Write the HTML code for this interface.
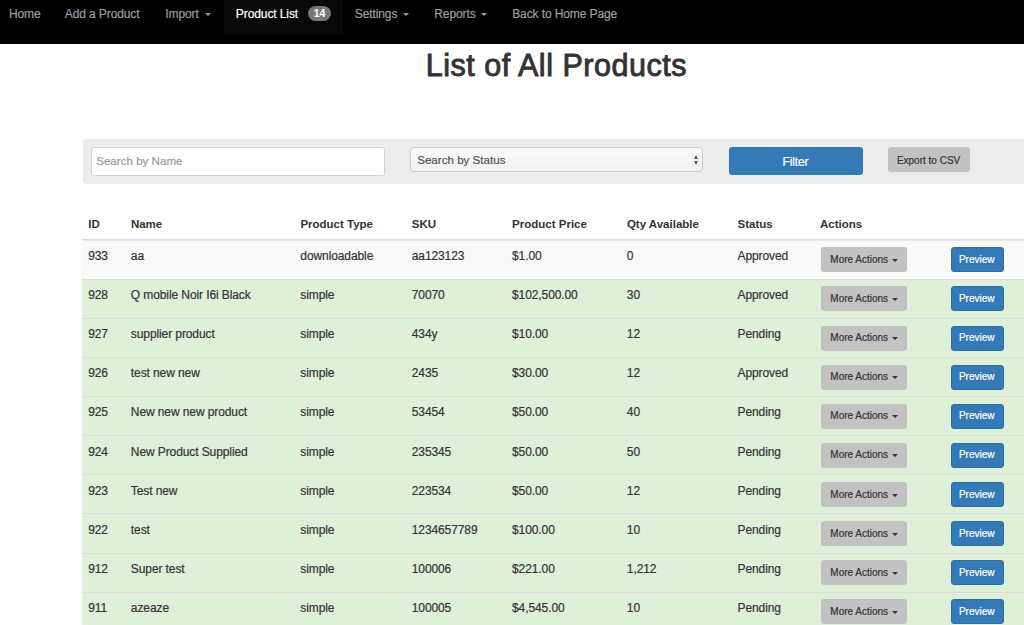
<!DOCTYPE html>
<html><head><meta charset="utf-8"><style>
html,body{margin:0;padding:0;width:1024px;height:625px;overflow:hidden;background:#fff;font-family:"Liberation Sans",sans-serif;}
.t{position:absolute;white-space:nowrap;}
.r{position:absolute;}
</style></head><body>
<div class="r" style="left:0px;top:0px;width:1024px;height:44px;background:#000"></div>
<div class="r" style="left:224px;top:0px;width:119px;height:35px;background:#080808"></div>
<div class="t" style="left:8.96px;top:6.64px;font-size:12px;line-height:15px;color:#9d9d9d;-webkit-text-stroke:0.2px #9d9d9d;letter-spacing:-0.1px;">Home</div>
<div class="t" style="left:64.76px;top:6.64px;font-size:12px;line-height:15px;color:#9d9d9d;-webkit-text-stroke:0.2px #9d9d9d;letter-spacing:-0.1px;">Add a Product</div>
<div class="t" style="left:165.26px;top:6.64px;font-size:12px;line-height:15px;color:#9d9d9d;-webkit-text-stroke:0.2px #9d9d9d;letter-spacing:-0.1px;">Import</div>
<div class="r" style="left:205px;top:13px;width:0;height:0;border-top:3.4px solid #9d9d9d;border-left:3.25px solid transparent;border-right:3.25px solid transparent"></div>
<div class="t" style="left:235.86px;top:6.64px;font-size:12px;line-height:15px;color:#fff;-webkit-text-stroke:0.2px #fff;letter-spacing:-0.1px;">Product List</div>
<div class="r" style="left:308px;top:6px;width:23px;height:15px;background:#777;border-radius:8px"></div>
<div class="t" style="left:313.76px;top:7.36px;font-size:10.5px;line-height:13px;color:#fff;font-weight:700;">14</div>
<div class="t" style="left:354.76px;top:6.64px;font-size:12px;line-height:15px;color:#9d9d9d;-webkit-text-stroke:0.2px #9d9d9d;letter-spacing:-0.1px;">Settings</div>
<div class="r" style="left:403.3px;top:13px;width:0;height:0;border-top:3.4px solid #9d9d9d;border-left:3.25px solid transparent;border-right:3.25px solid transparent"></div>
<div class="t" style="left:434.26px;top:6.64px;font-size:12px;line-height:15px;color:#9d9d9d;-webkit-text-stroke:0.2px #9d9d9d;letter-spacing:-0.1px;">Reports</div>
<div class="r" style="left:481.3px;top:13px;width:0;height:0;border-top:3.4px solid #9d9d9d;border-left:3.25px solid transparent;border-right:3.25px solid transparent"></div>
<div class="t" style="left:512.16px;top:6.64px;font-size:12px;line-height:15px;color:#9d9d9d;-webkit-text-stroke:0.2px #9d9d9d;letter-spacing:-0.1px;">Back to Home Page</div>
<div class="t" style="left:425.67px;top:46.13px;font-size:30.5px;line-height:38px;color:#333;letter-spacing:0.52px;-webkit-text-stroke:0.9px #333">List of All Products</div>
<div class="r" style="left:83px;top:139px;width:947px;height:45px;background:#ececec;border-radius:4px"></div>
<div class="r" style="left:91px;top:147px;width:294px;height:29px;background:#fff;border:1px solid #d2d2d2;border-radius:3px;box-sizing:border-box"></div>
<div class="t" style="left:96.19px;top:154.28px;font-size:11.6px;line-height:14px;color:#999;-webkit-text-stroke:0.2px #999;">Search by Name</div>
<div class="r" style="left:410px;top:147px;width:293px;height:25px;background:linear-gradient(#fbfbfb,#f1f1f1);border:1px solid #ccc;border-radius:4px;box-sizing:border-box"></div>
<div class="t" style="left:417.19px;top:152.68px;font-size:11.6px;line-height:14px;color:#555;-webkit-text-stroke:0.2px #555;">Search by Status</div>
<div class="r" style="left:694px;top:154.5px;width:0;height:0;border-bottom:4px solid #555;border-left:2.6px solid transparent;border-right:2.6px solid transparent"></div>
<div class="r" style="left:694px;top:161px;width:0;height:0;border-top:4px solid #555;border-left:2.6px solid transparent;border-right:2.6px solid transparent"></div>
<div class="r" style="left:729px;top:147px;width:134px;height:28px;background:#337ab7;border-radius:3px"></div>
<div class="t" style="left:782.46px;top:154.84px;font-size:12px;line-height:15px;color:#fff;-webkit-text-stroke:0.2px #fff;letter-spacing:-0.1px;">Filter</div>
<div class="r" style="left:888px;top:147px;width:82px;height:25px;background:#c2c2c2;border-radius:3px"></div>
<div class="t" style="left:896.90px;top:154.63px;font-size:10px;line-height:12px;color:#333;-webkit-text-stroke:0.2px #333;">Export to CSV</div>
<div class="t" style="left:88.19px;top:216.81px;font-size:11.5px;line-height:14px;color:#333;font-weight:700;">ID</div>
<div class="t" style="left:130.89px;top:216.81px;font-size:11.5px;line-height:14px;color:#333;font-weight:700;">Name</div>
<div class="t" style="left:300.39px;top:216.81px;font-size:11.5px;line-height:14px;color:#333;font-weight:700;">Product Type</div>
<div class="t" style="left:411.80px;top:216.81px;font-size:11.5px;line-height:14px;color:#333;font-weight:700;">SKU</div>
<div class="t" style="left:512.10px;top:216.81px;font-size:11.5px;line-height:14px;color:#333;font-weight:700;">Product Price</div>
<div class="t" style="left:626.90px;top:216.81px;font-size:11.5px;line-height:14px;color:#333;font-weight:700;">Qty Available</div>
<div class="t" style="left:737.60px;top:216.81px;font-size:11.5px;line-height:14px;color:#333;font-weight:700;">Status</div>
<div class="t" style="left:820.00px;top:216.81px;font-size:11.5px;line-height:14px;color:#333;font-weight:700;">Actions</div>
<div class="r" style="left:82px;top:239px;width:942px;height:1px;background:#dcdcdc"></div>
<div class="r" style="left:82px;top:240px;width:942px;height:1px;background:#e9e9e9"></div>
<div class="r" style="left:82px;top:241px;width:942px;height:38px;background:#f9f9f9"></div>
<div class="t" style="left:88.16px;top:249.04px;font-size:12px;line-height:15px;color:#333;-webkit-text-stroke:0.2px #333;letter-spacing:-0.1px;">933</div>
<div class="t" style="left:130.86px;top:249.04px;font-size:12px;line-height:15px;color:#333;-webkit-text-stroke:0.2px #333;letter-spacing:-0.1px;">aa</div>
<div class="t" style="left:300.36px;top:249.04px;font-size:12px;line-height:15px;color:#333;-webkit-text-stroke:0.2px #333;letter-spacing:-0.1px;">downloadable</div>
<div class="t" style="left:411.76px;top:249.04px;font-size:12px;line-height:15px;color:#333;-webkit-text-stroke:0.2px #333;letter-spacing:-0.1px;">aa123123</div>
<div class="t" style="left:512.06px;top:249.04px;font-size:12px;line-height:15px;color:#333;-webkit-text-stroke:0.2px #333;letter-spacing:-0.1px;">$1.00</div>
<div class="t" style="left:626.86px;top:249.04px;font-size:12px;line-height:15px;color:#333;-webkit-text-stroke:0.2px #333;letter-spacing:-0.1px;">0</div>
<div class="t" style="left:737.56px;top:249.04px;font-size:12px;line-height:15px;color:#333;-webkit-text-stroke:0.2px #333;letter-spacing:-0.1px;">Approved</div>
<div class="r" style="left:821px;top:247px;width:86px;height:25px;background:#c2c2c2;border-radius:3px"></div>
<div class="t" style="left:830.30px;top:254.43px;font-size:10px;line-height:12px;color:#333;-webkit-text-stroke:0.2px #333;">More Actions</div>
<div class="r" style="left:891.8px;top:259px;width:0;height:0;border-top:3px solid #333;border-left:3.1px solid transparent;border-right:3.1px solid transparent"></div>
<div class="r" style="left:951px;top:247px;width:53px;height:25px;background:#337ab7;border:1px solid #2e6da4;border-radius:3px;box-sizing:border-box"></div>
<div class="t" style="left:958.90px;top:253.53px;font-size:10px;line-height:12px;color:#fff;-webkit-text-stroke:0.2px #fff;">Preview</div>
<div class="r" style="left:82px;top:279px;width:942px;height:1px;background:#ddd"></div>
<div class="r" style="left:82px;top:280px;width:942px;height:38px;background:#dff0d8"></div>
<div class="t" style="left:88.16px;top:288.04px;font-size:12px;line-height:15px;color:#333;-webkit-text-stroke:0.2px #333;letter-spacing:-0.1px;">928</div>
<div class="t" style="left:130.86px;top:288.04px;font-size:12px;line-height:15px;color:#333;-webkit-text-stroke:0.2px #333;letter-spacing:-0.1px;">Q mobile Noir I6i Black</div>
<div class="t" style="left:300.36px;top:288.04px;font-size:12px;line-height:15px;color:#333;-webkit-text-stroke:0.2px #333;letter-spacing:-0.1px;">simple</div>
<div class="t" style="left:411.76px;top:288.04px;font-size:12px;line-height:15px;color:#333;-webkit-text-stroke:0.2px #333;letter-spacing:-0.1px;">70070</div>
<div class="t" style="left:512.06px;top:288.04px;font-size:12px;line-height:15px;color:#333;-webkit-text-stroke:0.2px #333;letter-spacing:-0.1px;">$102,500.00</div>
<div class="t" style="left:626.86px;top:288.04px;font-size:12px;line-height:15px;color:#333;-webkit-text-stroke:0.2px #333;letter-spacing:-0.1px;">30</div>
<div class="t" style="left:737.56px;top:288.04px;font-size:12px;line-height:15px;color:#333;-webkit-text-stroke:0.2px #333;letter-spacing:-0.1px;">Approved</div>
<div class="r" style="left:821px;top:286px;width:86px;height:25px;background:#c2c2c2;border-radius:3px"></div>
<div class="t" style="left:830.30px;top:293.43px;font-size:10px;line-height:12px;color:#333;-webkit-text-stroke:0.2px #333;">More Actions</div>
<div class="r" style="left:891.8px;top:298px;width:0;height:0;border-top:3px solid #333;border-left:3.1px solid transparent;border-right:3.1px solid transparent"></div>
<div class="r" style="left:951px;top:286px;width:53px;height:25px;background:#337ab7;border:1px solid #2e6da4;border-radius:3px;box-sizing:border-box"></div>
<div class="t" style="left:958.90px;top:292.53px;font-size:10px;line-height:12px;color:#fff;-webkit-text-stroke:0.2px #fff;">Preview</div>
<div class="r" style="left:82px;top:318px;width:942px;height:1px;background:#ddd"></div>
<div class="r" style="left:82px;top:319px;width:942px;height:38px;background:#dff0d8"></div>
<div class="t" style="left:88.16px;top:327.04px;font-size:12px;line-height:15px;color:#333;-webkit-text-stroke:0.2px #333;letter-spacing:-0.1px;">927</div>
<div class="t" style="left:130.86px;top:327.04px;font-size:12px;line-height:15px;color:#333;-webkit-text-stroke:0.2px #333;letter-spacing:-0.1px;">supplier product</div>
<div class="t" style="left:300.36px;top:327.04px;font-size:12px;line-height:15px;color:#333;-webkit-text-stroke:0.2px #333;letter-spacing:-0.1px;">simple</div>
<div class="t" style="left:411.76px;top:327.04px;font-size:12px;line-height:15px;color:#333;-webkit-text-stroke:0.2px #333;letter-spacing:-0.1px;">434y</div>
<div class="t" style="left:512.06px;top:327.04px;font-size:12px;line-height:15px;color:#333;-webkit-text-stroke:0.2px #333;letter-spacing:-0.1px;">$10.00</div>
<div class="t" style="left:626.86px;top:327.04px;font-size:12px;line-height:15px;color:#333;-webkit-text-stroke:0.2px #333;letter-spacing:-0.1px;">12</div>
<div class="t" style="left:737.56px;top:327.04px;font-size:12px;line-height:15px;color:#333;-webkit-text-stroke:0.2px #333;letter-spacing:-0.1px;">Pending</div>
<div class="r" style="left:821px;top:326px;width:86px;height:25px;background:#c2c2c2;border-radius:3px"></div>
<div class="t" style="left:830.30px;top:332.43px;font-size:10px;line-height:12px;color:#333;-webkit-text-stroke:0.2px #333;">More Actions</div>
<div class="r" style="left:891.8px;top:337px;width:0;height:0;border-top:3px solid #333;border-left:3.1px solid transparent;border-right:3.1px solid transparent"></div>
<div class="r" style="left:951px;top:326px;width:53px;height:25px;background:#337ab7;border:1px solid #2e6da4;border-radius:3px;box-sizing:border-box"></div>
<div class="t" style="left:958.90px;top:331.53px;font-size:10px;line-height:12px;color:#fff;-webkit-text-stroke:0.2px #fff;">Preview</div>
<div class="r" style="left:82px;top:357px;width:942px;height:1px;background:#ddd"></div>
<div class="r" style="left:82px;top:358px;width:942px;height:38px;background:#dff0d8"></div>
<div class="t" style="left:88.16px;top:366.04px;font-size:12px;line-height:15px;color:#333;-webkit-text-stroke:0.2px #333;letter-spacing:-0.1px;">926</div>
<div class="t" style="left:130.86px;top:366.04px;font-size:12px;line-height:15px;color:#333;-webkit-text-stroke:0.2px #333;letter-spacing:-0.1px;">test new new</div>
<div class="t" style="left:300.36px;top:366.04px;font-size:12px;line-height:15px;color:#333;-webkit-text-stroke:0.2px #333;letter-spacing:-0.1px;">simple</div>
<div class="t" style="left:411.76px;top:366.04px;font-size:12px;line-height:15px;color:#333;-webkit-text-stroke:0.2px #333;letter-spacing:-0.1px;">2435</div>
<div class="t" style="left:512.06px;top:366.04px;font-size:12px;line-height:15px;color:#333;-webkit-text-stroke:0.2px #333;letter-spacing:-0.1px;">$30.00</div>
<div class="t" style="left:626.86px;top:366.04px;font-size:12px;line-height:15px;color:#333;-webkit-text-stroke:0.2px #333;letter-spacing:-0.1px;">12</div>
<div class="t" style="left:737.56px;top:366.04px;font-size:12px;line-height:15px;color:#333;-webkit-text-stroke:0.2px #333;letter-spacing:-0.1px;">Approved</div>
<div class="r" style="left:821px;top:365px;width:86px;height:25px;background:#c2c2c2;border-radius:3px"></div>
<div class="t" style="left:830.30px;top:371.43px;font-size:10px;line-height:12px;color:#333;-webkit-text-stroke:0.2px #333;">More Actions</div>
<div class="r" style="left:891.8px;top:376px;width:0;height:0;border-top:3px solid #333;border-left:3.1px solid transparent;border-right:3.1px solid transparent"></div>
<div class="r" style="left:951px;top:365px;width:53px;height:25px;background:#337ab7;border:1px solid #2e6da4;border-radius:3px;box-sizing:border-box"></div>
<div class="t" style="left:958.90px;top:370.53px;font-size:10px;line-height:12px;color:#fff;-webkit-text-stroke:0.2px #fff;">Preview</div>
<div class="r" style="left:82px;top:396px;width:942px;height:1px;background:#ddd"></div>
<div class="r" style="left:82px;top:397px;width:942px;height:38px;background:#dff0d8"></div>
<div class="t" style="left:88.16px;top:405.04px;font-size:12px;line-height:15px;color:#333;-webkit-text-stroke:0.2px #333;letter-spacing:-0.1px;">925</div>
<div class="t" style="left:130.86px;top:405.04px;font-size:12px;line-height:15px;color:#333;-webkit-text-stroke:0.2px #333;letter-spacing:-0.1px;">New new new product</div>
<div class="t" style="left:300.36px;top:405.04px;font-size:12px;line-height:15px;color:#333;-webkit-text-stroke:0.2px #333;letter-spacing:-0.1px;">simple</div>
<div class="t" style="left:411.76px;top:405.04px;font-size:12px;line-height:15px;color:#333;-webkit-text-stroke:0.2px #333;letter-spacing:-0.1px;">53454</div>
<div class="t" style="left:512.06px;top:405.04px;font-size:12px;line-height:15px;color:#333;-webkit-text-stroke:0.2px #333;letter-spacing:-0.1px;">$50.00</div>
<div class="t" style="left:626.86px;top:405.04px;font-size:12px;line-height:15px;color:#333;-webkit-text-stroke:0.2px #333;letter-spacing:-0.1px;">40</div>
<div class="t" style="left:737.56px;top:405.04px;font-size:12px;line-height:15px;color:#333;-webkit-text-stroke:0.2px #333;letter-spacing:-0.1px;">Pending</div>
<div class="r" style="left:821px;top:404px;width:86px;height:25px;background:#c2c2c2;border-radius:3px"></div>
<div class="t" style="left:830.30px;top:410.43px;font-size:10px;line-height:12px;color:#333;-webkit-text-stroke:0.2px #333;">More Actions</div>
<div class="r" style="left:891.8px;top:415px;width:0;height:0;border-top:3px solid #333;border-left:3.1px solid transparent;border-right:3.1px solid transparent"></div>
<div class="r" style="left:951px;top:404px;width:53px;height:25px;background:#337ab7;border:1px solid #2e6da4;border-radius:3px;box-sizing:border-box"></div>
<div class="t" style="left:958.90px;top:409.53px;font-size:10px;line-height:12px;color:#fff;-webkit-text-stroke:0.2px #fff;">Preview</div>
<div class="r" style="left:82px;top:435px;width:942px;height:1px;background:#ddd"></div>
<div class="r" style="left:82px;top:436px;width:942px;height:38px;background:#dff0d8"></div>
<div class="t" style="left:88.16px;top:445.04px;font-size:12px;line-height:15px;color:#333;-webkit-text-stroke:0.2px #333;letter-spacing:-0.1px;">924</div>
<div class="t" style="left:130.86px;top:445.04px;font-size:12px;line-height:15px;color:#333;-webkit-text-stroke:0.2px #333;letter-spacing:-0.1px;">New Product Supplied</div>
<div class="t" style="left:300.36px;top:445.04px;font-size:12px;line-height:15px;color:#333;-webkit-text-stroke:0.2px #333;letter-spacing:-0.1px;">simple</div>
<div class="t" style="left:411.76px;top:445.04px;font-size:12px;line-height:15px;color:#333;-webkit-text-stroke:0.2px #333;letter-spacing:-0.1px;">235345</div>
<div class="t" style="left:512.06px;top:445.04px;font-size:12px;line-height:15px;color:#333;-webkit-text-stroke:0.2px #333;letter-spacing:-0.1px;">$50.00</div>
<div class="t" style="left:626.86px;top:445.04px;font-size:12px;line-height:15px;color:#333;-webkit-text-stroke:0.2px #333;letter-spacing:-0.1px;">50</div>
<div class="t" style="left:737.56px;top:445.04px;font-size:12px;line-height:15px;color:#333;-webkit-text-stroke:0.2px #333;letter-spacing:-0.1px;">Pending</div>
<div class="r" style="left:821px;top:443px;width:86px;height:25px;background:#c2c2c2;border-radius:3px"></div>
<div class="t" style="left:830.30px;top:449.43px;font-size:10px;line-height:12px;color:#333;-webkit-text-stroke:0.2px #333;">More Actions</div>
<div class="r" style="left:891.8px;top:454px;width:0;height:0;border-top:3px solid #333;border-left:3.1px solid transparent;border-right:3.1px solid transparent"></div>
<div class="r" style="left:951px;top:443px;width:53px;height:25px;background:#337ab7;border:1px solid #2e6da4;border-radius:3px;box-sizing:border-box"></div>
<div class="t" style="left:958.90px;top:448.53px;font-size:10px;line-height:12px;color:#fff;-webkit-text-stroke:0.2px #fff;">Preview</div>
<div class="r" style="left:82px;top:474px;width:942px;height:1px;background:#ddd"></div>
<div class="r" style="left:82px;top:475px;width:942px;height:38px;background:#dff0d8"></div>
<div class="t" style="left:88.16px;top:484.04px;font-size:12px;line-height:15px;color:#333;-webkit-text-stroke:0.2px #333;letter-spacing:-0.1px;">923</div>
<div class="t" style="left:130.86px;top:484.04px;font-size:12px;line-height:15px;color:#333;-webkit-text-stroke:0.2px #333;letter-spacing:-0.1px;">Test new</div>
<div class="t" style="left:300.36px;top:484.04px;font-size:12px;line-height:15px;color:#333;-webkit-text-stroke:0.2px #333;letter-spacing:-0.1px;">simple</div>
<div class="t" style="left:411.76px;top:484.04px;font-size:12px;line-height:15px;color:#333;-webkit-text-stroke:0.2px #333;letter-spacing:-0.1px;">223534</div>
<div class="t" style="left:512.06px;top:484.04px;font-size:12px;line-height:15px;color:#333;-webkit-text-stroke:0.2px #333;letter-spacing:-0.1px;">$50.00</div>
<div class="t" style="left:626.86px;top:484.04px;font-size:12px;line-height:15px;color:#333;-webkit-text-stroke:0.2px #333;letter-spacing:-0.1px;">12</div>
<div class="t" style="left:737.56px;top:484.04px;font-size:12px;line-height:15px;color:#333;-webkit-text-stroke:0.2px #333;letter-spacing:-0.1px;">Pending</div>
<div class="r" style="left:821px;top:482px;width:86px;height:25px;background:#c2c2c2;border-radius:3px"></div>
<div class="t" style="left:830.30px;top:489.43px;font-size:10px;line-height:12px;color:#333;-webkit-text-stroke:0.2px #333;">More Actions</div>
<div class="r" style="left:891.8px;top:494px;width:0;height:0;border-top:3px solid #333;border-left:3.1px solid transparent;border-right:3.1px solid transparent"></div>
<div class="r" style="left:951px;top:482px;width:53px;height:25px;background:#337ab7;border:1px solid #2e6da4;border-radius:3px;box-sizing:border-box"></div>
<div class="t" style="left:958.90px;top:488.53px;font-size:10px;line-height:12px;color:#fff;-webkit-text-stroke:0.2px #fff;">Preview</div>
<div class="r" style="left:82px;top:513px;width:942px;height:1px;background:#ddd"></div>
<div class="r" style="left:82px;top:514px;width:942px;height:39px;background:#dff0d8"></div>
<div class="t" style="left:88.16px;top:523.04px;font-size:12px;line-height:15px;color:#333;-webkit-text-stroke:0.2px #333;letter-spacing:-0.1px;">922</div>
<div class="t" style="left:130.86px;top:523.04px;font-size:12px;line-height:15px;color:#333;-webkit-text-stroke:0.2px #333;letter-spacing:-0.1px;">test</div>
<div class="t" style="left:300.36px;top:523.04px;font-size:12px;line-height:15px;color:#333;-webkit-text-stroke:0.2px #333;letter-spacing:-0.1px;">simple</div>
<div class="t" style="left:411.76px;top:523.04px;font-size:12px;line-height:15px;color:#333;-webkit-text-stroke:0.2px #333;letter-spacing:-0.1px;">1234657789</div>
<div class="t" style="left:512.06px;top:523.04px;font-size:12px;line-height:15px;color:#333;-webkit-text-stroke:0.2px #333;letter-spacing:-0.1px;">$100.00</div>
<div class="t" style="left:626.86px;top:523.04px;font-size:12px;line-height:15px;color:#333;-webkit-text-stroke:0.2px #333;letter-spacing:-0.1px;">10</div>
<div class="t" style="left:737.56px;top:523.04px;font-size:12px;line-height:15px;color:#333;-webkit-text-stroke:0.2px #333;letter-spacing:-0.1px;">Pending</div>
<div class="r" style="left:821px;top:521px;width:86px;height:25px;background:#c2c2c2;border-radius:3px"></div>
<div class="t" style="left:830.30px;top:528.43px;font-size:10px;line-height:12px;color:#333;-webkit-text-stroke:0.2px #333;">More Actions</div>
<div class="r" style="left:891.8px;top:533px;width:0;height:0;border-top:3px solid #333;border-left:3.1px solid transparent;border-right:3.1px solid transparent"></div>
<div class="r" style="left:951px;top:521px;width:53px;height:25px;background:#337ab7;border:1px solid #2e6da4;border-radius:3px;box-sizing:border-box"></div>
<div class="t" style="left:958.90px;top:527.53px;font-size:10px;line-height:12px;color:#fff;-webkit-text-stroke:0.2px #fff;">Preview</div>
<div class="r" style="left:82px;top:553px;width:942px;height:1px;background:#ddd"></div>
<div class="r" style="left:82px;top:554px;width:942px;height:38px;background:#dff0d8"></div>
<div class="t" style="left:88.16px;top:562.04px;font-size:12px;line-height:15px;color:#333;-webkit-text-stroke:0.2px #333;letter-spacing:-0.1px;">912</div>
<div class="t" style="left:130.86px;top:562.04px;font-size:12px;line-height:15px;color:#333;-webkit-text-stroke:0.2px #333;letter-spacing:-0.1px;">Super test</div>
<div class="t" style="left:300.36px;top:562.04px;font-size:12px;line-height:15px;color:#333;-webkit-text-stroke:0.2px #333;letter-spacing:-0.1px;">simple</div>
<div class="t" style="left:411.76px;top:562.04px;font-size:12px;line-height:15px;color:#333;-webkit-text-stroke:0.2px #333;letter-spacing:-0.1px;">100006</div>
<div class="t" style="left:512.06px;top:562.04px;font-size:12px;line-height:15px;color:#333;-webkit-text-stroke:0.2px #333;letter-spacing:-0.1px;">$221.00</div>
<div class="t" style="left:626.86px;top:562.04px;font-size:12px;line-height:15px;color:#333;-webkit-text-stroke:0.2px #333;letter-spacing:-0.1px;">1,212</div>
<div class="t" style="left:737.56px;top:562.04px;font-size:12px;line-height:15px;color:#333;-webkit-text-stroke:0.2px #333;letter-spacing:-0.1px;">Pending</div>
<div class="r" style="left:821px;top:560px;width:86px;height:25px;background:#c2c2c2;border-radius:3px"></div>
<div class="t" style="left:830.30px;top:567.43px;font-size:10px;line-height:12px;color:#333;-webkit-text-stroke:0.2px #333;">More Actions</div>
<div class="r" style="left:891.8px;top:572px;width:0;height:0;border-top:3px solid #333;border-left:3.1px solid transparent;border-right:3.1px solid transparent"></div>
<div class="r" style="left:951px;top:560px;width:53px;height:25px;background:#337ab7;border:1px solid #2e6da4;border-radius:3px;box-sizing:border-box"></div>
<div class="t" style="left:958.90px;top:566.53px;font-size:10px;line-height:12px;color:#fff;-webkit-text-stroke:0.2px #fff;">Preview</div>
<div class="r" style="left:82px;top:592px;width:942px;height:1px;background:#ddd"></div>
<div class="r" style="left:82px;top:593px;width:942px;height:32px;background:#dff0d8"></div>
<div class="t" style="left:88.16px;top:601.04px;font-size:12px;line-height:15px;color:#333;-webkit-text-stroke:0.2px #333;letter-spacing:-0.1px;">911</div>
<div class="t" style="left:130.86px;top:601.04px;font-size:12px;line-height:15px;color:#333;-webkit-text-stroke:0.2px #333;letter-spacing:-0.1px;">azeaze</div>
<div class="t" style="left:300.36px;top:601.04px;font-size:12px;line-height:15px;color:#333;-webkit-text-stroke:0.2px #333;letter-spacing:-0.1px;">simple</div>
<div class="t" style="left:411.76px;top:601.04px;font-size:12px;line-height:15px;color:#333;-webkit-text-stroke:0.2px #333;letter-spacing:-0.1px;">100005</div>
<div class="t" style="left:512.06px;top:601.04px;font-size:12px;line-height:15px;color:#333;-webkit-text-stroke:0.2px #333;letter-spacing:-0.1px;">$4,545.00</div>
<div class="t" style="left:626.86px;top:601.04px;font-size:12px;line-height:15px;color:#333;-webkit-text-stroke:0.2px #333;letter-spacing:-0.1px;">10</div>
<div class="t" style="left:737.56px;top:601.04px;font-size:12px;line-height:15px;color:#333;-webkit-text-stroke:0.2px #333;letter-spacing:-0.1px;">Pending</div>
<div class="r" style="left:821px;top:599px;width:86px;height:25px;background:#c2c2c2;border-radius:3px"></div>
<div class="t" style="left:830.30px;top:606.43px;font-size:10px;line-height:12px;color:#333;-webkit-text-stroke:0.2px #333;">More Actions</div>
<div class="r" style="left:891.8px;top:611px;width:0;height:0;border-top:3px solid #333;border-left:3.1px solid transparent;border-right:3.1px solid transparent"></div>
<div class="r" style="left:951px;top:599px;width:53px;height:25px;background:#337ab7;border:1px solid #2e6da4;border-radius:3px;box-sizing:border-box"></div>
<div class="t" style="left:958.90px;top:605.53px;font-size:10px;line-height:12px;color:#fff;-webkit-text-stroke:0.2px #fff;">Preview</div>

</body></html>
